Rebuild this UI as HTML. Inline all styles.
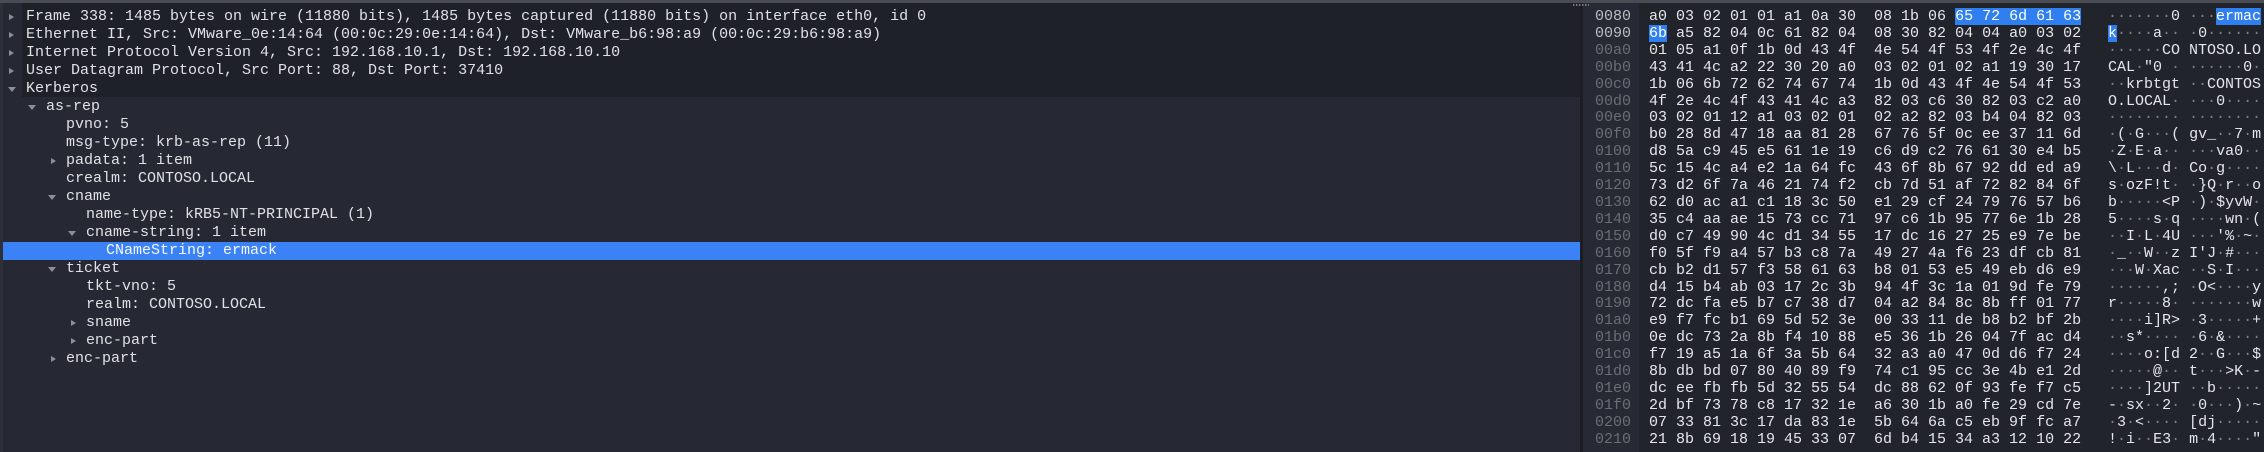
<!DOCTYPE html>
<html><head><meta charset="utf-8"><style>
*{margin:0;padding:0;box-sizing:border-box}
body{width:2264px;height:452px;overflow:hidden;background:#262833;font-family:"Liberation Mono",monospace;font-size:15px;color:#dfe1e5;position:relative}
.topbar{position:absolute;left:0;top:0;width:2264px;height:3px;background:#4a4c53}
.dark{position:absolute;left:22px;top:3px;width:1558px;height:94px;background:#1f2128}
.leftline{position:absolute;left:0;top:3px;width:3px;height:449px;background:#2e3039}
.row{position:absolute;left:3px;width:1577px;height:18px;line-height:18px;white-space:pre}
.sel{background:#3b82f6;color:#f4f7ff}
.ar{position:absolute;top:6px;width:0;height:0}
.c{border-top:3.5px solid transparent;border-bottom:3.5px solid transparent;border-left:5px solid #8c8f96;top:5.5px}
.e{border-left:4px solid transparent;border-right:4px solid transparent;border-top:5px solid #8c8f96;top:7px}
.div{position:absolute;left:1580px;top:3px;width:3px;height:449px;background:#1b1d22}
.offbg{position:absolute;left:1583px;top:3px;width:56px;height:449px;background:#272a34}
.hexbg{position:absolute;left:1639px;top:3px;width:625px;height:449px;background:#22242c}
.handle{position:absolute;left:1573px;top:4px;width:16px;height:2px;background:repeating-linear-gradient(90deg,#777 0 1.5px,transparent 1.5px 3px)}
pre{position:absolute;font-family:"Liberation Mono",monospace;font-size:15px;line-height:16.9px;top:9px;margin:0}
.off{left:1595px;color:#6a6d74}
.off b{font-weight:normal;color:#b9bcc2}
.hex{left:1649px;color:#e4e6ea}
.asc{left:2108px;color:#e4e6ea}
.asc i,.d{font-style:normal;color:#7d8088}
.h{background:#2f7ff0;color:#fff}
</style></head><body>
<div class="topbar"></div>
<div class="dark"></div>
<div class="leftline"></div>

<div class="row" style="top:8px;padding-left:23px"><span class="ar c" style="left:6px"></span>Frame 338: 1485 bytes on wire (11880 bits), 1485 bytes captured (11880 bits) on interface eth0, id 0</div>
<div class="row" style="top:26px;padding-left:23px"><span class="ar c" style="left:6px"></span>Ethernet II, Src: VMware_0e:14:64 (00:0c:29:0e:14:64), Dst: VMware_b6:98:a9 (00:0c:29:b6:98:a9)</div>
<div class="row" style="top:44px;padding-left:23px"><span class="ar c" style="left:6px"></span>Internet Protocol Version 4, Src: 192.168.10.1, Dst: 192.168.10.10</div>
<div class="row" style="top:62px;padding-left:23px"><span class="ar c" style="left:6px"></span>User Datagram Protocol, Src Port: 88, Dst Port: 37410</div>
<div class="row" style="top:80px;padding-left:23px"><span class="ar e" style="left:5px"></span>Kerberos</div>
<div class="row" style="top:98px;padding-left:43px"><span class="ar e" style="left:25px"></span>as-rep</div>
<div class="row" style="top:116px;padding-left:63px">pvno: 5</div>
<div class="row" style="top:134px;padding-left:63px">msg-type: krb-as-rep (11)</div>
<div class="row" style="top:152px;padding-left:63px"><span class="ar c" style="left:48px"></span>padata: 1 item</div>
<div class="row" style="top:170px;padding-left:63px">crealm: CONTOSO.LOCAL</div>
<div class="row" style="top:188px;padding-left:63px"><span class="ar e" style="left:45px"></span>cname</div>
<div class="row" style="top:206px;padding-left:83px">name-type: kRB5-NT-PRINCIPAL (1)</div>
<div class="row" style="top:224px;padding-left:83px"><span class="ar e" style="left:65px"></span>cname-string: 1 item</div>
<div class="row sel" style="top:242px;padding-left:103px">CNameString: ermack</div>
<div class="row" style="top:260px;padding-left:63px"><span class="ar e" style="left:45px"></span>ticket</div>
<div class="row" style="top:278px;padding-left:83px">tkt-vno: 5</div>
<div class="row" style="top:296px;padding-left:83px">realm: CONTOSO.LOCAL</div>
<div class="row" style="top:314px;padding-left:83px"><span class="ar c" style="left:68px"></span>sname</div>
<div class="row" style="top:332px;padding-left:83px"><span class="ar c" style="left:68px"></span>enc-part</div>
<div class="row" style="top:350px;padding-left:63px"><span class="ar c" style="left:48px"></span>enc-part</div>

<div class="div"></div>
<div class="offbg"></div>
<div class="hexbg"></div>
<div class="handle"></div>

<pre class="off"><b>0080</b>
<b>0090</b>
00a0
00b0
00c0
00d0
00e0
00f0
0100
0110
0120
0130
0140
0150
0160
0170
0180
0190
01a0
01b0
01c0
01d0
01e0
01f0
0200
0210</pre>

<pre class="hex">a0 03 02 01 01 a1 0a 30  08 1b 06 <span class="h">65 72 6d 61 63</span>
<span class="h">6b</span> a5 82 04 0c 61 82 04  08 30 82 04 04 a0 03 02
01 05 a1 0f 1b 0d 43 4f  4e 54 4f 53 4f 2e 4c 4f
43 41 4c a2 22 30 20 a0  03 02 01 02 a1 19 30 17
1b 06 6b 72 62 74 67 74  1b 0d 43 4f 4e 54 4f 53
4f 2e 4c 4f 43 41 4c a3  82 03 c6 30 82 03 c2 a0
03 02 01 12 a1 03 02 01  02 a2 82 03 b4 04 82 03
b0 28 8d 47 18 aa 81 28  67 76 5f 0c ee 37 11 6d
d8 5a c9 45 e5 61 1e 19  c6 d9 c2 76 61 30 e4 b5
5c 15 4c a4 e2 1a 64 fc  43 6f 8b 67 92 dd ed a9
73 d2 6f 7a 46 21 74 f2  cb 7d 51 af 72 82 84 6f
62 d0 ac a1 c1 18 3c 50  e1 29 cf 24 79 76 57 b6
35 c4 aa ae 15 73 cc 71  97 c6 1b 95 77 6e 1b 28
d0 c7 49 90 4c d1 34 55  17 dc 16 27 25 e9 7e be
f0 5f f9 a4 57 b3 c8 7a  49 27 4a f6 23 df cb 81
cb b2 d1 57 f3 58 61 63  b8 01 53 e5 49 eb d6 e9
d4 15 b4 ab 03 17 2c 3b  94 4f 3c 1a 01 9d fe 79
72 dc fa e5 b7 c7 38 d7  04 a2 84 8c 8b ff 01 77
e9 f7 fc b1 69 5d 52 3e  00 33 11 de b8 b2 bf 2b
0e dc 73 2a 8b f4 10 88  e5 36 1b 26 04 7f ac d4
f7 19 a5 1a 6f 3a 5b 64  32 a3 a0 47 0d d6 f7 24
8b db bd 07 80 40 89 f9  74 c1 95 cc 3e 4b e1 2d
dc ee fb fb 5d 32 55 54  dc 88 62 0f 93 fe f7 c5
2d bf 73 78 c8 17 32 1e  a6 30 1b a0 fe 29 cd 7e
07 33 81 3c 17 da 83 1e  5b 64 6a c5 eb 9f fc a7
21 8b 69 18 19 45 33 07  6d b4 15 34 a3 12 10 22</pre>

<pre class="asc"><i>·······</i>0 <i>···</i><span class="h">ermac</span>
<span class="h">k</span><i>····</i>a<i>··</i> <i>·</i>0<i>······</i>
<i>······</i>CO NTOSO.LO
CAL<i>·</i>"0 <i>·</i> <i>······</i>0<i>·</i>
<i>··</i>krbtgt <i>··</i>CONTOS
O.LOCAL<i>·</i> <i>···</i>0<i>····</i>
<i>········</i> <i>········</i>
<i>·</i>(<i>·</i>G<i>···</i>( gv_<i>··</i>7<i>·</i>m
<i>·</i>Z<i>·</i>E<i>·</i>a<i>··</i> <i>···</i>va0<i>··</i>
\<i>·</i>L<i>···</i>d<i>·</i> Co<i>·</i>g<i>····</i>
s<i>·</i>ozF!t<i>·</i> <i>·</i>}Q<i>·</i>r<i>··</i>o
b<i>·····</i>&lt;P <i>·</i>)<i>·</i>$yvW<i>·</i>
5<i>····</i>s<i>·</i>q <i>····</i>wn<i>·</i>(
<i>··</i>I<i>·</i>L<i>·</i>4U <i>···</i>'%<i>·</i>~<i>·</i>
<i>·</i>_<i>··</i>W<i>··</i>z I'J<i>·</i>#<i>···</i>
<i>···</i>W<i>·</i>Xac <i>··</i>S<i>·</i>I<i>···</i>
<i>······</i>,; <i>·</i>O&lt;<i>····</i>y
r<i>·····</i>8<i>·</i> <i>·······</i>w
<i>····</i>i]R&gt; <i>·</i>3<i>·····</i>+
<i>··</i>s*<i>····</i> <i>·</i>6<i>·</i>&amp;<i>····</i>
<i>····</i>o:[d 2<i>··</i>G<i>···</i>$
<i>·····</i>@<i>··</i> t<i>···</i>&gt;K<i>·</i>-
<i>····</i>]2UT <i>··</i>b<i>·····</i>
-<i>·</i>sx<i>··</i>2<i>·</i> <i>·</i>0<i>···</i>)<i>·</i>~
<i>·</i>3<i>·</i>&lt;<i>····</i> [dj<i>·····</i>
!<i>·</i>i<i>··</i>E3<i>·</i> m<i>·</i>4<i>····</i>"</pre>
</body></html>
